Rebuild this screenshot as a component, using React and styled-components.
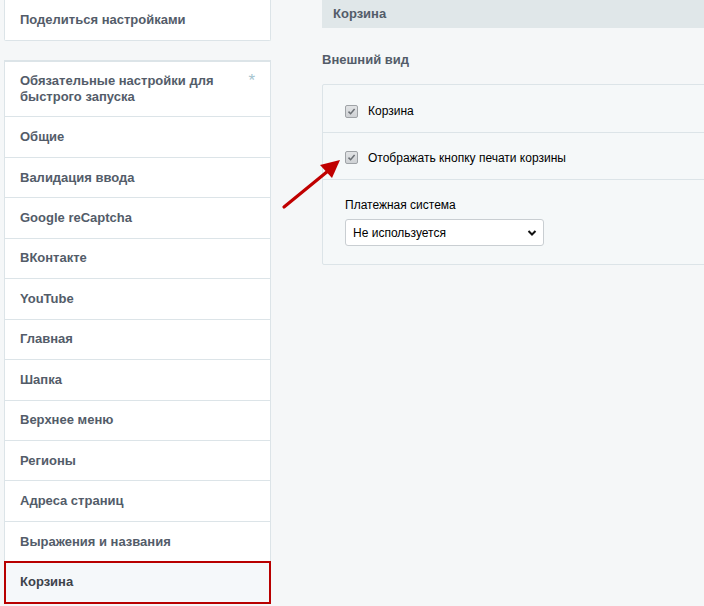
import React from "react";
import styled, { createGlobalStyle } from "styled-components";

const Global = createGlobalStyle`
  html, body { margin: 0; padding: 0; }
  body {
    background: #f5f7f8;
    font-family: "Liberation Sans", Arial, sans-serif;
    overflow: hidden;
    width: 704px;
    height: 606px;
  }
`;

const Page = styled.div`
  position: relative;
  display: flex;
  align-items: flex-start;
  width: 704px;
  height: 606px;
  overflow: hidden;
`;

const Sidebar = styled.div`
  width: 267px;
  margin-left: 4px;
  flex-shrink: 0;
  display: flex;
  flex-direction: column;
  gap: 19px;
`;

const Card = styled.div`
  background: #fff;
  border: 1px solid #dce4e8;
  border-top-width: ${(p) => (p.$cutTop ? "0" : "2px")};
  border-radius: 0 0 2px 2px;
  box-sizing: border-box;
`;

const NavItem = styled.div`
  position: relative;
  display: flex;
  align-items: center;
  justify-content: space-between;
  box-sizing: border-box;
  height: ${(p) => (p.$tall ? "55px" : "40.45px")};
  padding: 0 15px 0 15px;
  border-bottom: ${(p) => (p.$last ? "0" : "1px solid #dce4e8")};
  font-size: 13px;
  line-height: 16px;
  font-weight: bold;
  color: ${(p) => (p.$active ? "#3d434b" : "#535c69")};
  background: ${(p) => (p.$active ? "#f5f8fa" : "#fff")};
  box-shadow: ${(p) => (p.$active ? "inset 1px 0 0 #2f7fd8" : "none")};
  outline: ${(p) => (p.$active ? "2px solid #b80000" : "none")};
  outline-offset: -1px;
`;

const Star = styled.span`
  color: #a5c4cf;
  font-size: 17px;
  font-weight: normal;
  align-self: flex-start;
  margin-top: 11px;
`;

const Content = styled.div`
  flex: 1;
  margin-left: 51px;
  margin-right: -30px;
  display: flex;
  flex-direction: column;
`;

const TitleBar = styled.div`
  height: 28px;
  background: #e0e7e9;
  display: flex;
  align-items: center;
  padding: 0 0 2px 11px;
  box-sizing: border-box;
  font-size: 13px;
  font-weight: bold;
  color: #535c69;
`;

const SectionTitle = styled.div`
  margin-top: 24px;
  margin-bottom: 16px;
  font-size: 13px;
  line-height: 16px;
  font-weight: bold;
  color: #535c69;
`;

const FieldsCard = styled.div`
  border: 1px solid #dce4e8;
  border-radius: 2px;
  background: #f5f8f9;
`;

const CheckRow = styled.label`
  display: flex;
  align-items: center;
  gap: 10px;
  height: ${(p) => p.$h}px;
  box-sizing: border-box;
  padding: ${(p) => (p.$h > 47 ? 5 : 3)}px 0 0 22px;
  border-bottom: 1px solid #dce4e8;
  font-size: 12px;
  color: #000;
`;

const Box = styled.span`
  width: 11px;
  height: 11px;
  border: 1px solid #9fa3a7;
  border-radius: 2px;
  background: linear-gradient(#e1e3e5, #cfd2d5);
  display: inline-flex;
  align-items: center;
  justify-content: center;
`;

const SelectRow = styled.div`
  padding: 18px 22px 18px;
  display: flex;
  flex-direction: column;
  gap: 7px;
`;

const FieldLabel = styled.div`
  font-size: 12px;
  color: #000;
  line-height: 14px;
`;

const SelectBox = styled.div`
  width: 199px;
  height: 27px;
  box-sizing: border-box;
  border: 1px solid #c9ced2;
  border-radius: 3px;
  background: #fff;
  display: flex;
  align-items: center;
  justify-content: space-between;
  padding: 0 6px 0 7px;
  font-size: 12px;
  color: #000;
`;

const Arrow = styled.svg`
  position: absolute;
  left: 278px;
  top: 150px;
  pointer-events: none;
`;

const Check = () => (
  <Box>
    <svg width="9" height="9" viewBox="0 0 9 9">
      <path d="M1.5 4.6 L3.6 6.7 L7.6 2" fill="none" stroke="#6b7075" strokeWidth="1.5" />
    </svg>
  </Box>
);

const items = [
  "Общие",
  "Валидация ввода",
  "Google reCaptcha",
  "ВКонтакте",
  "YouTube",
  "Главная",
  "Шапка",
  "Верхнее меню",
  "Регионы",
  "Адреса страниц",
  "Выражения и названия",
];

export default function App() {
  return (
    <>
      <Global />
      <Page>
        <Sidebar>
          <Card $cutTop>
            <NavItem $last>Поделиться настройками</NavItem>
          </Card>
          <Card>
            <NavItem $tall>
              <span>
                Обязательные настройки для
                <br />
                быстрого запуска
              </span>
              <Star>*</Star>
            </NavItem>
            {items.map((t) => (
              <NavItem key={t}>{t}</NavItem>
            ))}
            <NavItem $active $last>Корзина</NavItem>
          </Card>
        </Sidebar>
        <Content>
          <TitleBar>Корзина</TitleBar>
          <SectionTitle>Внешний вид</SectionTitle>
          <FieldsCard>
            <CheckRow $h={48}>
              <Check />
              Корзина
            </CheckRow>
            <CheckRow $h={47}>
              <Check />
              Отображать кнопку печати корзины
            </CheckRow>
            <SelectRow>
              <FieldLabel>Платежная система</FieldLabel>
              <SelectBox>
                Не используется
                <svg width="10" height="8" viewBox="0 0 10 8">
                  <path d="M1.5 2 L5 5.5 L8.5 2" fill="none" stroke="#111" strokeWidth="2" />
                </svg>
              </SelectBox>
            </SelectRow>
          </FieldsCard>
        </Content>
        <Arrow width="70" height="64" viewBox="0 0 70 64">
          <path d="M6 57 L50 21" stroke="#c00000" strokeWidth="3.2" strokeLinecap="round" />
          <path d="M62 10 L42 15 L54 28 Z" fill="#c00000" />
        </Arrow>
      </Page>
    </>
  );
}
